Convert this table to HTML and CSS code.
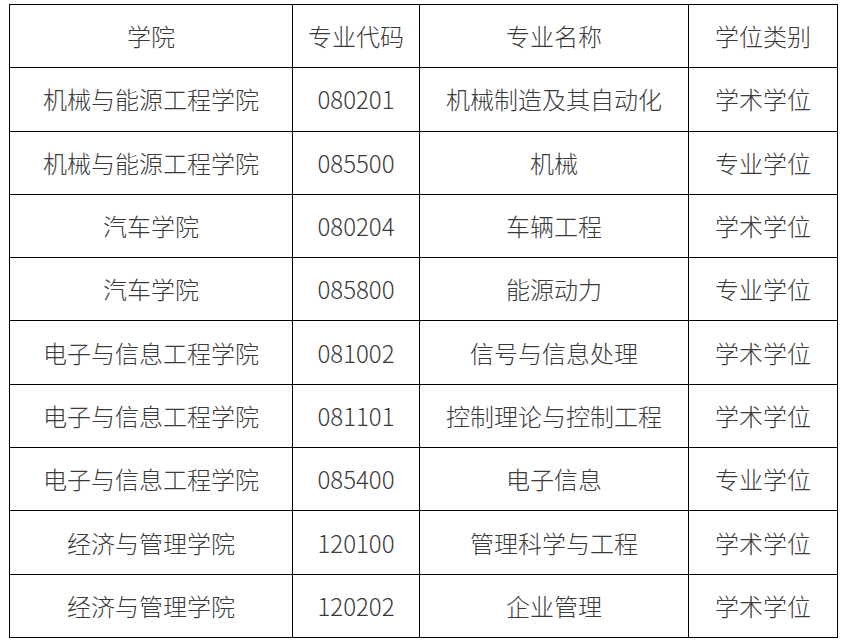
FILE: index.html
```html
<!DOCTYPE html>
<html lang="zh-CN">
<head>
<meta charset="utf-8">
<title>专业列表</title>
<link rel="stylesheet" href="styles.css">
</head>
<body>
<table class="grid">
  <colgroup>
    <col class="c1"><col class="c2"><col class="c3"><col class="c4">
  </colgroup>
  <tr><td>学院</td><td>专业代码</td><td>专业名称</td><td>学位类别</td></tr>
  <tr><td>机械与能源工程学院</td><td>080201</td><td>机械制造及其自动化</td><td>学术学位</td></tr>
  <tr><td>机械与能源工程学院</td><td>085500</td><td>机械</td><td>专业学位</td></tr>
  <tr><td>汽车学院</td><td>080204</td><td>车辆工程</td><td>学术学位</td></tr>
  <tr><td>汽车学院</td><td>085800</td><td>能源动力</td><td>专业学位</td></tr>
  <tr><td>电子与信息工程学院</td><td>081002</td><td>信号与信息处理</td><td>学术学位</td></tr>
  <tr><td>电子与信息工程学院</td><td>081101</td><td>控制理论与控制工程</td><td>学术学位</td></tr>
  <tr><td>电子与信息工程学院</td><td>085400</td><td>电子信息</td><td>专业学位</td></tr>
  <tr><td>经济与管理学院</td><td>120100</td><td>管理科学与工程</td><td>学术学位</td></tr>
  <tr><td>经济与管理学院</td><td>120202</td><td>企业管理</td><td>学术学位</td></tr>
</table>
</body>
</html>
```
FILE: styles.css
```css
html, body {
  margin: 0;
  padding: 0;
  background: #ffffff;
}
body {
  padding: 4px 0 0 9px;
  font-family: "Noto Sans CJK SC", "Noto Sans", sans-serif;
  font-weight: 300;
  color: #3a3a3a;
}
.grid {
  border-collapse: collapse;
  table-layout: fixed;
  width: 828px;
}
.c1 { width: 283px; }
.c2 { width: 127px; }
.c3 { width: 269px; }
.c4 { width: 149px; }
.grid tr {
  height: 63.3px;
}
.grid td {
  border: 1px solid #000000;
  padding: 0;
  text-align: center;
  vertical-align: middle;
  font-size: 24px;
  line-height: 30px;
}
```
